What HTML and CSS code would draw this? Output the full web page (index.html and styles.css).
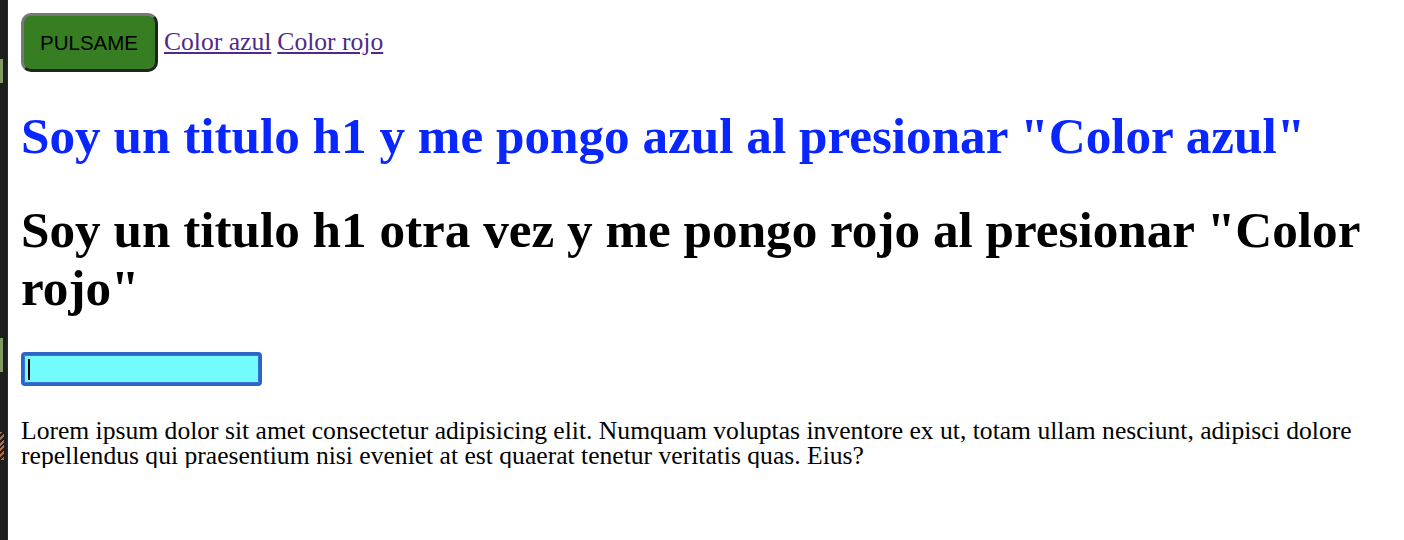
FILE: index.html
```html
<!DOCTYPE html>
<html lang="es">
<head>
<meta charset="utf-8">
<title>Colores</title>
<link rel="stylesheet" href="styles.css">
</head>
<body>
<div class="gutter">
  <span class="mark mark-a"></span>
  <span class="mark mark-b"></span>
  <span class="hatch"></span>
</div>
<div class="top">
  <button class="pulsa">PULSAME</button>
  <a class="link" href="#">Color azul</a>
  <a class="link" href="#">Color rojo</a>
</div>
<h1 class="titulo azul">Soy un titulo h1 y me pongo azul al presionar "Color azul"</h1>
<h1 class="titulo">Soy un titulo h1 otra vez y me pongo rojo al presionar "Color rojo"</h1>
<div class="campo"><input class="entrada" type="text"></div>
<p class="texto">Lorem ipsum dolor sit amet consectetur adipisicing elit. Numquam voluptas inventore ex ut, totam ullam nesciunt, adipisci dolore repellendus qui praesentium nisi eveniet at est quaerat tenetur veritatis quas. Eius?</p>
</body>
</html>
```
FILE: styles.css
```css
html, body {
  background: #ffffff;
}
body {
  margin: 13px 36px 0 21px;
  font-family: "Liberation Serif", "Times New Roman", serif;
  color: #000;
}
.gutter {
  position: fixed;
  left: 0;
  top: 0;
  width: 7px;
  height: 100%;
  background: #1e1e1e;
  border-right: 1px solid #2a2a2a;
}
.mark {
  position: absolute;
  left: 0;
  width: 3px;
  background: #7f9b5f;
}
.mark-a { top: 59px; height: 24px; }
.mark-b { top: 338px; height: 34px; }
.hatch {
  position: absolute;
  left: 0;
  top: 432px;
  width: 4px;
  height: 28px;
  background: repeating-linear-gradient(135deg, #b06a44 0 2px, #1e1e1e 2px 4px);
}
.top {
  display: flex;
  align-items: baseline;
  gap: 6px;
  height: 59px;
}
.pulsa {
  font-family: "Liberation Sans", Arial, sans-serif;
  font-size: 20.5px;
  line-height: 23px;
  color: #000;
  background: #377d21;
  padding: 15px 17px 15px 16px;
  border: 3px solid;
  border-color: #777 #222 #222 #777;
  border-radius: 10px;
}
.link {
  font-size: 25.6px;
  color: #4f2a8a;
  text-decoration: underline;
}
.titulo {
  font-size: 51.2px;
  line-height: 58px;
  font-weight: bold;
  margin: 36px 0 0;
}
.azul {
  margin-top: 35px;
  color: #0a26ff;
}
.campo {
  position: relative;
  margin-top: 35px;
  height: 34px;
}
.campo::after {
  content: "";
  position: absolute;
  left: 7px;
  top: 7px;
  width: 2px;
  height: 21px;
  background: #000;
}
.entrada {
  box-sizing: border-box;
  width: 241px;
  height: 34px;
  margin: 0;
  background: #74fbfd;
  border: 3px solid #2d64c8;
  border-radius: 4px;
  outline: none;
  box-shadow: inset 0 0 0 1px #3a72d6;
  font-size: 20px;
  padding: 0 4px;
}
.texto {
  font-size: 25.6px;
  line-height: 25px;
  margin: 32px 0 0;
}
```
